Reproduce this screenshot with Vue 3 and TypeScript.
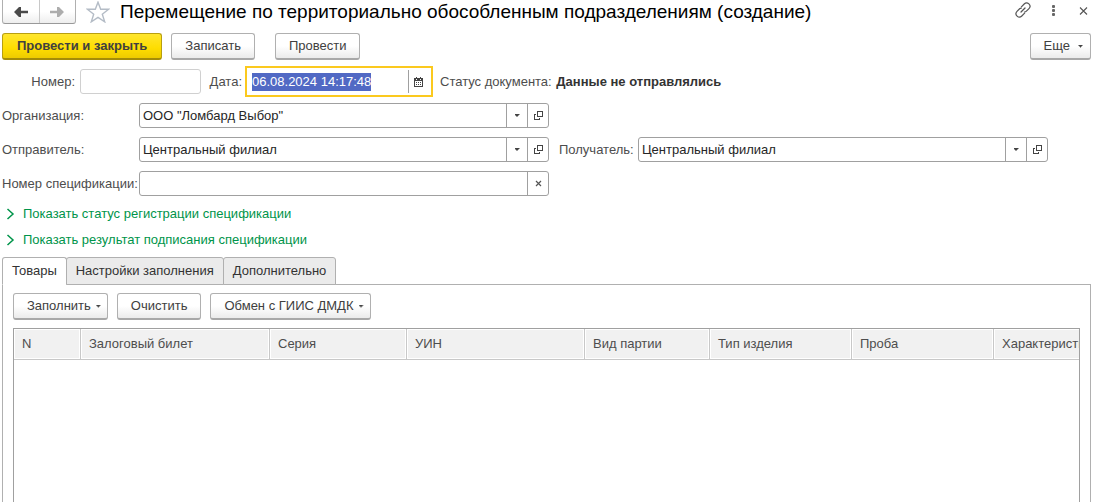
<script setup lang="ts">
import { onMounted, ref } from 'vue'

interface Column {
  title: string
  width: number
}

const columns: Column[] = [
  { title: 'N', width: 67 },
  { title: 'Залоговый билет', width: 189 },
  { title: 'Серия', width: 137 },
  { title: 'УИН', width: 178 },
  { title: 'Вид партии', width: 125 },
  { title: 'Тип изделия', width: 142 },
  { title: 'Проба', width: 142 },
  { title: 'Характеристики', width: 160 },
]

const tabs = ['Товары', 'Настройки заполнения', 'Дополнительно']
const activeTab = ref(0)

const docNumber = ref('')
const docDate = ref('06.08.2024 14:17:48')
const organization = ref('ООО "Ломбард Выбор"')
const sender = ref('Центральный филиал')
const recipient = ref('Центральный филиал')
const specNumber = ref('')

const dateInput = ref<HTMLInputElement | null>(null)

onMounted(() => {
  dateInput.value?.focus()
  dateInput.value?.select()
})
</script>

<template>
  <main class="page">
    <header class="titlebar">
      <div class="nav">
        <button type="button" aria-label="Назад">
          <svg width="14" height="10" viewBox="0 0 14 10"><path d="M0 5L5 0H7V3.8H14V6.2H7V10H5Z" fill="#4a4a4a" /></svg>
        </button>
        <button type="button" aria-label="Вперед">
          <svg width="14" height="10" viewBox="0 0 14 10"><path d="M14 5L9 0H7V3.8H0V6.2H7V10H9Z" fill="#adadad" /></svg>
        </button>
      </div>
      <button type="button" class="icon star" aria-label="Избранное">
        <svg width="24" height="22" viewBox="0 0 24 22"><path d="M12 1.2L14.7 8.3H22.6L16.3 13.2L18.7 20.8L12 16.4L5.3 20.8L7.7 13.2L1.4 8.3H9.3Z" fill="#fff" stroke="#b4bcc6" stroke-width="1.4" /></svg>
      </button>
      <h1>Перемещение по территориально обособленным подразделениям (создание)</h1>
      <div class="window-tools">
        <button type="button" class="icon" aria-label="Ссылка">
          <svg width="16" height="16" viewBox="0 0 16 16"><g fill="none" stroke="#555" stroke-width="1.2" stroke-linecap="round"><path d="M6.4 4.8L9.2 2A3.3 3.3 0 0 1 14 6.6L11.4 9.2A2.6 2.6 0 0 1 9.4 10" /><path d="M9.6 11.2L6.8 14A3.3 3.3 0 0 1 2 9.4L4.6 6.8A2.6 2.6 0 0 1 6.2 6.1" /><path d="M6 10L10 6" /></g></svg>
        </button>
        <button type="button" class="icon" aria-label="Меню">
          <svg width="16" height="16" viewBox="0 0 16 16"><g fill="#666"><rect x="7" y="3" width="3" height="3" rx="1" /><rect x="7" y="7" width="3" height="3" rx="1" /><rect x="7" y="11" width="3" height="3" rx="1" /></g></svg>
        </button>
        <button type="button" class="icon" aria-label="Закрыть">
          <svg width="16" height="16" viewBox="0 0 16 16"><path d="M5 5.5L12 12.5M12 5.5L5 12.5" stroke="#555" stroke-width="1.1" /></svg>
        </button>
      </div>
    </header>

    <div class="commands">
      <button type="button" class="btn primary">Провести и закрыть</button>
      <button type="button" class="btn">Записать</button>
      <button type="button" class="btn post">Провести</button>
      <button type="button" class="btn drop more">Еще<i class="caret"></i></button>
    </div>

    <div class="doc-row">
      <label class="number-label" for="number">Номер:</label>
      <input id="number" v-model="docNumber" class="number" type="text" />
      <label class="date-label" for="date">Дата:</label>
      <div class="date">
        <input id="date" ref="dateInput" v-model="docDate" type="text" />
        <button type="button" aria-label="Выбрать дату">
          <svg width="9" height="10" viewBox="0 0 9 10" shape-rendering="crispEdges"><path d="M0 1H9V10H0ZM1 4V9H8V4Z" fill="#444" fill-rule="evenodd" /><path d="M2 0h1v1h-1zM6 0h1v1h-1zM2 5h1v1h-1zM4 5h1v1h-1zM6 5h1v1h-1zM2 7h1v1h-1zM4 7h1v1h-1zM6 7h1v1h-1z" fill="#444" /><path d="M2 2h1v1h-1zM6 2h1v1h-1z" fill="#fff" /></svg>
        </button>
      </div>
      <span class="status">Статус документа: <strong>Данные не отправлялись</strong></span>
    </div>

    <div class="form">
      <label for="org">Организация:</label>
      <div class="field">
        <input id="org" v-model="organization" type="text" />
        <button type="button" aria-label="Выбрать организацию"><i class="caret"></i></button>
        <button type="button" aria-label="Открыть организацию">
          <svg width="9" height="9" viewBox="0 0 9 9" shape-rendering="crispEdges"><path d="M3.5 0.5H8.5V5.5H3.5ZM2 3.5H0.5V8.5H5.5V7" fill="none" stroke="#444" /></svg>
        </button>
      </div>

      <label class="first" for="sender">Отправитель:</label>
      <div class="field">
        <input id="sender" v-model="sender" type="text" />
        <button type="button" aria-label="Выбрать отправителя"><i class="caret"></i></button>
        <button type="button" aria-label="Открыть отправителя">
          <svg width="9" height="9" viewBox="0 0 9 9" shape-rendering="crispEdges"><path d="M3.5 0.5H8.5V5.5H3.5ZM2 3.5H0.5V8.5H5.5V7" fill="none" stroke="#444" /></svg>
        </button>
      </div>
      <label class="second" for="recipient">Получатель:</label>
      <div class="field">
        <input id="recipient" v-model="recipient" type="text" />
        <button type="button" aria-label="Выбрать получателя"><i class="caret"></i></button>
        <button type="button" aria-label="Открыть получателя">
          <svg width="9" height="9" viewBox="0 0 9 9" shape-rendering="crispEdges"><path d="M3.5 0.5H8.5V5.5H3.5ZM2 3.5H0.5V8.5H5.5V7" fill="none" stroke="#444" /></svg>
        </button>
      </div>

      <label class="first" for="spec">Номер спецификации:</label>
      <div class="field">
        <input id="spec" v-model="specNumber" type="text" />
        <button type="button" aria-label="Очистить номер">
          <svg width="7" height="7" viewBox="0 0 7 7"><path d="M1 1L6 6M6 1L1 6" stroke="#555" stroke-width="1.2" /></svg>
        </button>
      </div>
    </div>

    <div class="links">
      <a href="#registration"><svg width="9" height="12" viewBox="0 0 9 12"><path d="M1.5 1L7 6L1.5 11" fill="none" stroke="#00944a" stroke-width="1.5" /></svg>Показать статус регистрации спецификации</a>
      <a href="#signing"><svg width="9" height="12" viewBox="0 0 9 12"><path d="M1.5 1L7 6L1.5 11" fill="none" stroke="#00944a" stroke-width="1.5" /></svg>Показать результат подписания спецификации</a>
    </div>

    <div class="tabs" role="tablist">
      <button
        v-for="(tab, index) in tabs"
        :key="tab"
        type="button"
        role="tab"
        :aria-selected="index === activeTab"
        :class="{ active: index === activeTab }"
        @click="activeTab = index"
      >{{ tab }}</button>
    </div>

    <section class="panel">
      <div class="panel-commands">
        <button type="button" class="btn drop">Заполнить<i class="caret"></i></button>
        <button type="button" class="btn">Очистить</button>
        <button type="button" class="btn drop">Обмен с ГИИС ДМДК<i class="caret"></i></button>
      </div>
      <div class="grid">
        <table>
          <colgroup>
            <col v-for="column in columns" :key="column.title" :style="{ width: column.width + 'px' }" />
          </colgroup>
          <thead>
            <tr>
              <th v-for="column in columns" :key="column.title" scope="col">{{ column.title }}</th>
            </tr>
          </thead>
        </table>
      </div>
    </section>
  </main>
</template>

<style>
body {
  margin: 0;
  background: #fff;
}
</style>

<style scoped>
.page {
  box-sizing: border-box;
  display: flex;
  flex-direction: column;
  height: 100vh;
  padding: 0 4px 0 2px;
  overflow: hidden;
  color: #4d4d4d;
  font: 13px/16px "Liberation Sans", Arial, sans-serif;
}

button,
input {
  box-sizing: border-box;
  margin: 0;
  font: inherit;
}

button {
  display: inline-flex;
  align-items: center;
  justify-content: center;
  padding: 0;
  border: 0;
  background: none;
  color: inherit;
  white-space: nowrap;
}

input {
  min-width: 0;
  border: 0;
  outline: 0;
  background: none;
  color: #262626;
}

.titlebar {
  display: flex;
  align-items: center;
  flex: none;
  height: 24px;
}

.nav {
  display: flex;
  align-self: stretch;
  box-sizing: border-box;
  width: 74px;
  border: 1px solid #b0b0b0;
  border-top: 0;
  border-bottom-color: #999;
  border-radius: 0 0 3px 3px;
  background: linear-gradient(#fff 50%, #eee);
}

.nav button {
  flex: 1;
}

.nav button + button {
  border-left: 1px solid #c8c8c8;
}

.icon {
  flex: none;
}

.star {
  margin-left: 10px;
}

h1 {
  flex: 1;
  margin: 0 0 0 10px;
  color: #000;
  font-size: 19px;
  font-weight: normal;
  line-height: 24px;
  white-space: nowrap;
}

.window-tools {
  display: flex;
  gap: 14px;
  align-self: flex-start;
  padding-top: 2px;
}

.commands {
  display: flex;
  flex: none;
  margin-top: 9px;
  gap: 9px;
}

.btn {
  height: 27px;
  padding: 0 13px;
  border: 1px solid #b0b0b0;
  border-bottom: 2px solid #a8a8a8;
  border-radius: 3px;
  background: linear-gradient(#fff 50%, #ebebeb);
  color: #404040;
}

.primary {
  padding: 0 14px;
  border-color: #b89f10;
  border-bottom-color: #a48c08;
  background: linear-gradient(#ffe62e, #fedd00 60%, #edcb00);
  font-weight: bold;
}

.post {
  margin-left: 11px;
}

.drop {
  gap: 5px;
  padding-right: 6px;
}

.more {
  gap: 8px;
  padding-right: 7px;
  margin-left: auto;
}

.caret {
  width: 5px;
  height: 3px;
  background: #444;
  clip-path: polygon(0 0, 5px 0, 5px 1px, 4px 1px, 4px 2px, 3px 2px, 3px 3px, 2px 3px, 2px 2px, 1px 2px, 1px 1px, 0 1px);
}

.doc-row {
  display: flex;
  align-items: center;
  flex: none;
  height: 31px;
  margin-top: 6px;
  white-space: nowrap;
}

.number-label {
  width: 78px;
  padding-right: 5px;
  box-sizing: border-box;
  text-align: right;
}

.number {
  width: 121px;
  height: 25px;
  border: 1px solid #d0d0d0;
  border-radius: 3px;
}

.date-label {
  width: 44px;
  box-sizing: border-box;
  padding-right: 3px;
  text-align: right;
}

.date {
  display: flex;
  align-items: center;
  box-sizing: border-box;
  width: 188px;
  height: 31px;
  border: 2px solid #fbc91e;
}

.date input {
  flex: 1;
  padding: 0 5px;
  line-height: 18px;
}

.date input::selection {
  background: #5169c4;
  color: #fff;
}

.date button {
  width: 23px;
  height: 23px;
  padding-right: 3px;
  border-left: 1px solid #a0a0a0;
}

.status {
  margin-left: 7px;
}

.status strong {
  margin-left: 1px;
  color: #333;
}

.form {
  display: grid;
  flex: none;
  grid-template-columns: 137px minmax(0, 1fr) 89px minmax(0, 1fr);
  row-gap: 9px;
  align-items: center;
  margin: 6px 43px 0 0;
  white-space: nowrap;
}

.first {
  grid-column: 1;
}

.second {
  padding-left: 10px;
}

.field {
  display: flex;
  box-sizing: border-box;
  height: 25px;
  border: 1px solid #a0a0a0;
  border-radius: 3px;
}

.field input {
  flex: 1;
  padding: 0 3px;
}

.field button {
  width: 21px;
  border-left: 1px solid #a0a0a0;
}

.links {
  display: flex;
  flex: none;
  flex-direction: column;
  align-items: flex-start;
  gap: 10px;
  margin: 10px 0 0 4px;
}

.links a {
  display: flex;
  align-items: center;
  gap: 8px;
  color: #00944a;
  text-decoration: none;
  white-space: nowrap;
}

.tabs {
  display: flex;
  flex: none;
  position: relative;
  z-index: 1;
  margin: 9px 0 -1px;
}

.tabs button {
  height: 28px;
  padding: 0 9px;
  border: 1px solid #b0b0b0;
  border-radius: 3px 3px 0 0;
  background: #ebebeb;
  color: #333;
}

.tabs button + button {
  margin-left: -1px;
}

.tabs .active {
  border-bottom-color: #fff;
  background: #fff;
}

.panel {
  display: flex;
  flex: 1;
  flex-direction: column;
  min-height: 0;
  padding: 8px 10px 0;
  border: 1px solid #b0b0b0;
  border-bottom: 0;
}

.panel-commands {
  display: flex;
  flex: none;
  gap: 9px;
}

.grid {
  flex: 1;
  min-height: 0;
  margin-top: 8px;
  overflow: hidden;
  border: 1px solid #a0a0a0;
  border-bottom: 0;
}

table {
  width: 1140px;
  border-spacing: 0;
  table-layout: fixed;
}

th {
  box-sizing: border-box;
  height: 31px;
  padding: 0 8px;
  border-right: 1px solid #c8c8c8;
  border-bottom: 1px solid #c8c8c8;
  background: #f1f1f1;
  box-shadow: inset 0 0 0 1px #fff;
  font-weight: normal;
  text-align: left;
  white-space: nowrap;
}
</style>
